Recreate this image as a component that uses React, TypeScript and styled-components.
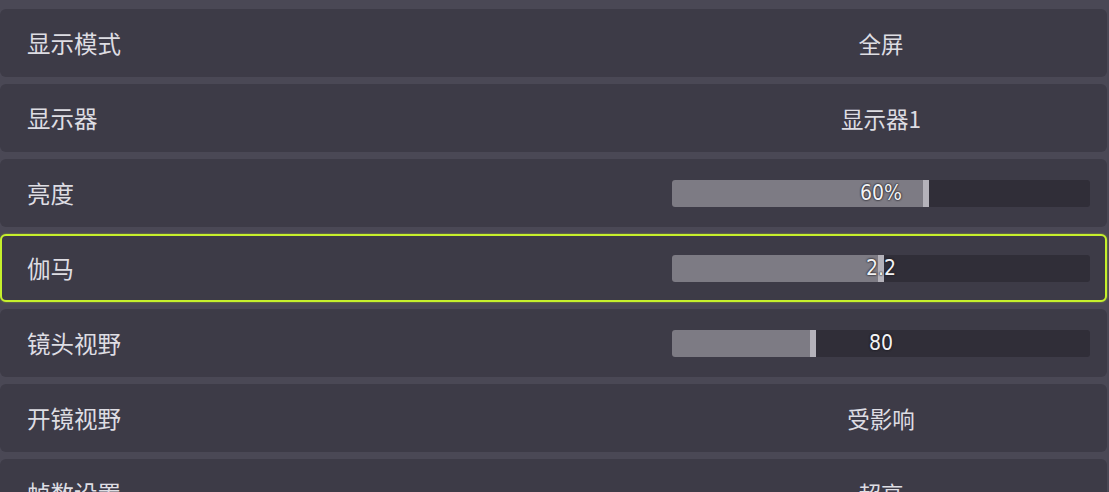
import React from 'react'
import styled, { createGlobalStyle } from 'styled-components'

const GlobalStyle = createGlobalStyle`
  html, body {
    margin: 0;
    padding: 0;
    background: #4a4855;
    overflow: hidden;
  }
`

const Page = styled.div`
  width: 1109px;
  height: 492px;
  box-sizing: border-box;
  padding: 9px 2px 0 0;
  display: flex;
  flex-direction: column;
  gap: 7px;
  background: #4a4855;
  font-family: "Noto Sans CJK SC", "Noto Sans", sans-serif;
  overflow: hidden;
`

const Row = styled.div<{ active?: boolean }>`
  flex: 0 0 68px;
  height: 68px;
  box-sizing: border-box;
  display: grid;
  grid-template-columns: 1fr 418px;
  align-items: center;
  padding: 0 15px 0 27px;
  background: #3d3b47;
  border-radius: 6px;
  border: 2px solid ${({ active }) => (active ? '#c6f02c' : 'transparent')};
  ${({ active }) => (active ? 'box-shadow: 0 0 2px rgba(198, 240, 44, 0.6);' : '')}
`

const Label = styled.span`
  color: #dedde3;
  font-size: 23.5px;
  font-weight: 400;
  margin-left: -2px;
`

const Value = styled.span`
  color: #dedde3;
  font-size: 22.5px;
  font-weight: 400;
  text-align: center;
`

const Track = styled.div`
  position: relative;
  height: 27px;
  background: #302e38;
  border-radius: 3px;
  overflow: hidden;
  display: flex;
  align-items: center;
  justify-content: center;
`

const Fill = styled.div`
  position: absolute;
  left: 0;
  top: 0;
  bottom: 0;
  background: #7d7b84;
  border-right: 6px solid #b4b2ba;
  box-sizing: border-box;
`

const SliderText = styled.span`
  position: relative;
  color: #f2f2f4;
  font-family: "Liberation Sans Narrow", "DejaVu Sans Condensed", "Roboto", sans-serif;
  font-size: 21px;
  text-shadow: 0 0 2px #1c1b22, 0 0 2px #1c1b22;
`

type Setting =
  | { label: string; value: string }
  | { label: string; slider: number; text: string; active?: boolean }

const settings: Setting[] = [
  { label: '显示模式', value: '全屏' },
  { label: '显示器', value: '显示器1' },
  { label: '亮度', slider: 0.614, text: '60%' },
  { label: '伽马', slider: 0.507, text: '2.2', active: true },
  { label: '镜头视野', slider: 0.345, text: '80' },
  { label: '开镜视野', value: '受影响' },
  { label: '帧数设置', value: '超高' },
]

export default function App() {
  return (
    <Page>
      <GlobalStyle />
      {settings.map((s) => (
        <Row key={s.label} active={'slider' in s && !!s.active}>
          <Label>{s.label}</Label>
          {'slider' in s ? (
            <Track>
              <Fill style={{ width: `${s.slider * 100}%` }} />
              <SliderText>{s.text}</SliderText>
            </Track>
          ) : (
            <Value>{s.value}</Value>
          )}
        </Row>
      ))}
    </Page>
  )
}
